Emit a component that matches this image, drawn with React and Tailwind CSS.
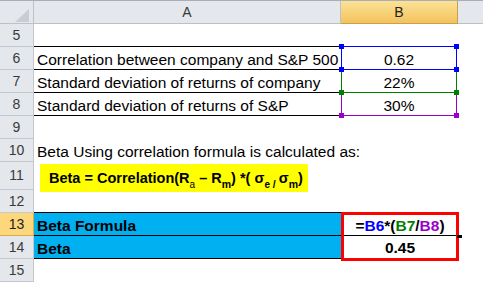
const Handle = ({ className }) => (
  <div className={`absolute w-[5px] h-[5px] ${className}`} />
);

const RowHead = ({ num, active }) => (
  <div
    className={`w-[34px] shrink-0 flex items-center justify-center text-[14px] border-r border-b ${
      active
        ? 'bg-[#fdd77b] border-[#d8ab4a] text-[#222]'
        : 'bg-[#e4e7ec] border-[#c3c8cf] text-[#3a3a3a]'
    }`}
  >
    {num}
  </div>
);

const Row = ({ num, h = 'h-[23px]', active, aClass = 'border-transparent', a, b }) => (
  <div className={`flex ${h}`}>
    <RowHead num={num} active={active} />
    <div className={`w-[307px] shrink-0 border-b flex items-end pl-[3px] pb-[1px] leading-[17px] whitespace-nowrap ${aClass}`}>
      {a}
    </div>
    <div className="w-[117px] shrink-0 relative">{b}</div>
    <div className="flex-1" />
  </div>
);

export default function App() {
  return (
    <div className="w-[483px] h-[283px] overflow-hidden bg-white text-black text-[15.5px] font-['Liberation_Sans',Arial,sans-serif]">
      {/* column headers */}
      <div className="flex h-[24px] border-t border-[#a9aeb6] text-[14px] text-[#3a3a3a]">
        <div className="w-[34px] shrink-0 bg-[#e4e7ec] border-r border-b border-[#bcc1c8] relative">
          <svg className="absolute left-0 top-0" width="33" height="23" viewBox="0 0 33 23">
            <polygon points="15,21 29,21 29,8" fill="#c9cdd3" />
          </svg>
        </div>
        <div className="w-[307px] shrink-0 bg-[#e4e7ec] border-r border-b border-[#bcc1c8] flex items-center justify-center">
          A
        </div>
        <div className="w-[117px] shrink-0 bg-gradient-to-b from-[#fbe296] to-[#f4c35c] border-r border-b border-[#c9a04a] flex items-center justify-center text-[#222]">
          B
        </div>
        <div className="flex-1 bg-[#e4e7ec] border-b border-[#bcc1c8]" />
      </div>

      <Row
        num="5"
        aClass="border-black"
        b={<div className="absolute left-0 bottom-0 w-[116px] h-px bg-[#0000ff]" />}
      />
      <Row
        num="6"
        aClass="border-black"
        a="Correlation between company and S&P 500"
        b={
          <div className="absolute left-0 top-0 w-[116px] h-full border-x border-b border-[#0000ff] flex items-end justify-center pb-[1px] leading-[17px]">
            0.62
            <Handle className="bg-[#0000ff] -left-[3px] -top-[3px]" />
            <Handle className="bg-[#0000ff] -right-[3px] -top-[3px]" />
            <Handle className="bg-[#0000ff] -left-[3px] -bottom-[3px] z-10" />
            <Handle className="bg-[#0000ff] -right-[3px] -bottom-[3px] z-10" />
          </div>
        }
      />
      <Row
        num="7"
        aClass="border-black"
        a="Standard deviation of returns of company"
        b={
          <div className="absolute left-0 top-0 w-[116px] h-full border-x border-b border-[#008000] flex items-end justify-center pb-[1px] leading-[17px]">
            22%
            <Handle className="bg-[#008000] -left-[3px] -bottom-[3px] z-10" />
            <Handle className="bg-[#008000] -right-[3px] -bottom-[3px] z-10" />
          </div>
        }
      />
      <Row
        num="8"
        aClass="border-black"
        a="Standard deviation of returns of S&P"
        b={
          <div className="absolute left-0 top-0 w-[116px] h-full border-x border-b border-[#9900cc] flex items-end justify-center pb-[1px] leading-[17px]">
            30%
            <Handle className="bg-[#9900cc] -left-[3px] -bottom-[3px] z-10" />
            <Handle className="bg-[#9900cc] -right-[3px] -bottom-[3px] z-10" />
          </div>
        }
      />
      <Row num="9" />
      <Row num="10" a="Beta Using correlation formula is calculated as:" />

      {/* row 11: yellow formula box */}
      <div className="flex h-[28px]">
        <RowHead num="11" />
        <div className="w-[307px] shrink-0 pl-[6px] pt-[2px]">
          <div className="w-[268px] h-[28px] bg-[#ffff00] font-bold text-[14.5px] pl-[9px] flex items-end pb-[5px] leading-[17px] whitespace-nowrap">
            <span>
              Beta = Correlation(R<sub className="text-[10px] align-[-2px] font-normal">a</sub> – R
              <sub className="text-[10.5px] align-[-2px]">m</sub>) *( σ
              <sub className="text-[10px] align-[-2px]">e</sub>
              <sub className="text-[10.5px] align-[-2px]"> / </sub>σ
              <sub className="text-[10.5px] align-[-2px]">m</sub>)
            </span>
          </div>
        </div>
        <div className="flex-1" />
      </div>

      <Row num="12" aClass="border-black" />

      {/* rows 13-14 */}
      <div className="flex h-[23px]">
        <RowHead num="13" active />
        <div className="w-[307px] shrink-0 bg-[#00b0f0] border-b border-black flex items-end pl-[3px] pb-[1px] leading-[17px] font-bold">
          Beta Formula
        </div>
        <div className="w-[118px] shrink-0 relative border-t-[3px] border-x-[3px] border-[#ff0000] -mt-[1px] h-[24px]">
          <div className="h-full border-b border-black flex items-end justify-center pb-[1px] leading-[17px] font-bold">
            <span>
              =<span className="text-[#0000ff]">B6</span>*(<span className="text-[#008000]">B7</span>/
              <span className="text-[#9900cc]">B8</span>)
            </span>
          </div>
          <div className="absolute -right-[6px] -bottom-[2px] w-[5px] h-[3px] bg-black" />
        </div>
        <div className="flex-1" />
      </div>
      <div className="flex h-[23px]">
        <RowHead num="14" />
        <div className="w-[307px] shrink-0 bg-[#00b0f0] border-b border-black flex items-end pl-[3px] pb-[1px] leading-[17px] font-bold">
          Beta
        </div>
        <div className="w-[118px] shrink-0 border-b-[3px] border-x-[3px] border-[#ff0000] h-[25px] flex items-end justify-center pb-[2px] leading-[17px] font-bold">
          0.45
        </div>
        <div className="flex-1" />
      </div>
      <Row num="15" />
    </div>
  );
}
